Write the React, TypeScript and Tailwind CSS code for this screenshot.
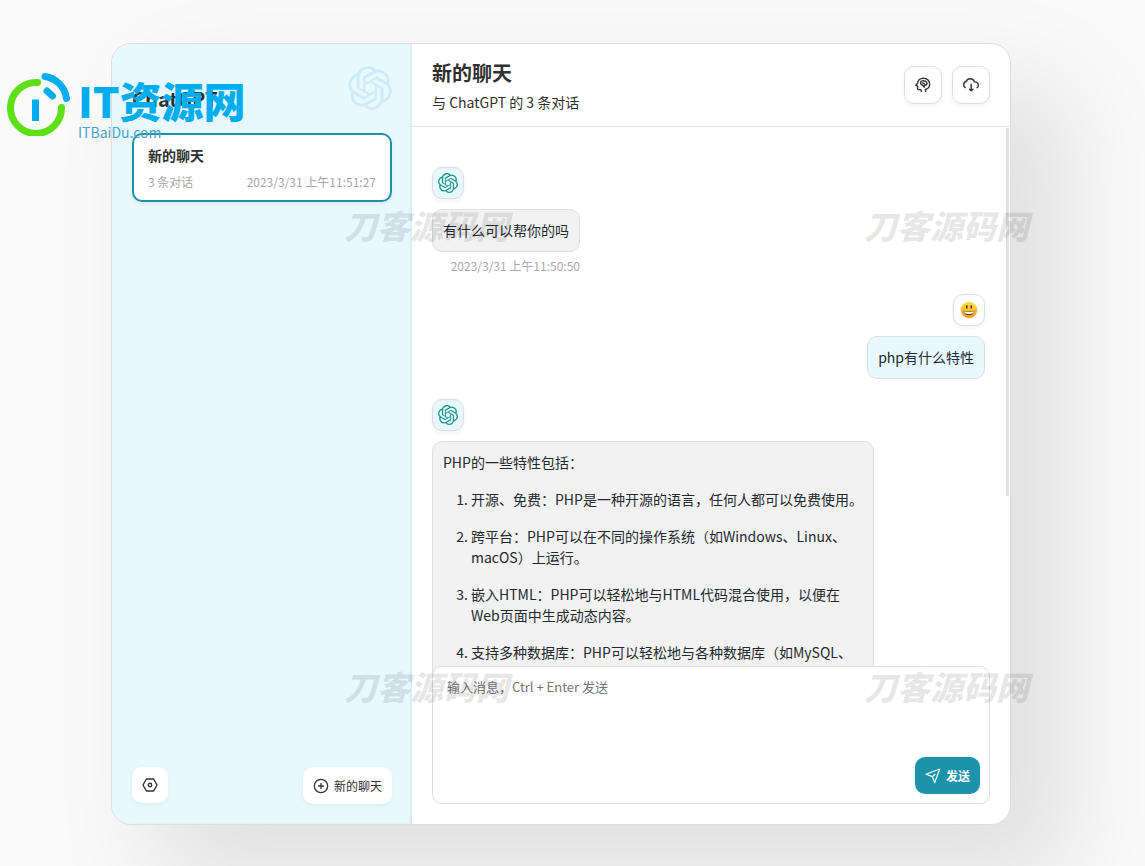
import React, { useState } from 'react';
import { SiOpenai } from 'react-icons/si';

type Message = {
  id: number;
  role: 'user' | 'assistant';
  content: string;
  items?: string[];
  date?: string;
};

const messages: Message[] = [
  { id: 1, role: 'assistant', content: '有什么可以帮你的吗', date: '2023/3/31 上午11:50:50' },
  { id: 2, role: 'user', content: 'php有什么特性' },
  {
    id: 3,
    role: 'assistant',
    content: 'PHP的一些特性包括：',
    items: [
      '开源、免费：PHP是一种开源的语言，任何人都可以免费使用。',
      '跨平台：PHP可以在不同的操作系统（如Windows、Linux、macOS）上运行。',
      '嵌入HTML：PHP可以轻松地与HTML代码混合使用，以便在Web页面中生成动态内容。',
      '支持多种数据库：PHP可以轻松地与各种数据库（如MySQL、Oracle、PostgreSQL等）进行交互。',
    ],
  },
];

const BrainIcon = () => (
  <svg className="size-4" viewBox="0 0 16 16" fill="none" stroke="#333" strokeWidth="1.4" strokeLinecap="round" strokeLinejoin="round">
    <path d="M6.400 14.400 5.700 12.600H3.400c-.5 0-.8-.4-.8-.9V9.200L.8 8.300 2.600 6.200C2.800 3.200 5.300 1.200 8.400 1.200c3.600 0 6.300 2.500 6.300 5.800 0 2.700-1.700 4.900-4.300 5.500l.4 1.900" />
    <path d="M5.800 5.200c0-1 .8-1.500 1.800-1.300C9.800 3.500 12 4.600 12 6.300c0 1.300-1.200 1.900-2.500 1.900L9.100 10 7.500 8C6.200 7.800 5.300 6.500 5.800 5.200zM7.600 5.900l1.700.8" />
  </svg>
);

const CloudIcon = () => (
  <svg className="size-4" viewBox="0 0 16 16" fill="none" stroke="#333" strokeWidth="1.4" strokeLinecap="round" strokeLinejoin="round">
    <path d="M2.200 10.600C1.200 9.900.7 8.900.7 7.700c0-1.800 1-3.100 2.600-3.500C3.900 2.500 5.400 1.700 7.200 1.700c2.100 0 3.700 1.200 4.200 3.200 2.200.1 3.900 1.500 3.900 3.400 0 1-.4 1.800-1.200 2.400" />
    <path d="M8.200 7.200v6.400M6.500 12.200l1.700 1.500 1.700-1.500" />
  </svg>
);

const SettingsIcon = () => (
  <svg className="size-4" viewBox="0 0 16 16" fill="none" stroke="#333" strokeWidth="1.4" strokeLinejoin="round">
    <path d="M4.400 2h7.200L15 8l-3.400 6H4.400L1 8z" />
    <circle cx="8" cy="8" r="1.700" />
  </svg>
);

const AddIcon = () => (
  <svg className="size-4" viewBox="0 0 16 16" fill="none" stroke="#333" strokeWidth="1.3" strokeLinecap="round">
    <circle cx="8" cy="8" r="6.700" />
    <path d="M8 5.500v5M5.500 8h5" />
  </svg>
);

const SendIcon = () => (
  <svg className="size-4" viewBox="0 0 16 16" fill="none" stroke="#fff" strokeWidth="1.200" strokeLinejoin="round" strokeLinecap="round">
    <path d="M14.700 1 9.700 14.600 7.400 8.600 1 6.200z" />
    <path d="M10 6.300 7.400 8.600" />
  </svg>
);

const SmileIcon = () => (
  <svg className="size-[18px]" viewBox="0 0 18 18">
    <defs>
      <linearGradient id="face" x1="0" y1="0" x2="0" y2="1">
        <stop offset="0" stopColor="#ffe14d" />
        <stop offset="1" stopColor="#f59a10" />
      </linearGradient>
    </defs>
    <circle cx="9" cy="9" r="8.300" fill="url(#face)" />
    <ellipse cx="6.800" cy="5.800" rx=".9" ry="1.900" fill="#5b3a12" />
    <ellipse cx="11.200" cy="5.800" rx=".9" ry="1.900" fill="#5b3a12" />
    <path d="M3.500 9.700c3.500.8 7.500.8 11 0-.2 3-2.400 4.600-5.500 4.600s-5.300-1.600-5.500-4.600z" fill="#6b3d10" />
    <path d="M4.200 10.300c3 .7 6.600.7 9.600 0l-.5 2c-2.700.8-5.900.8-8.600 0z" fill="#fff" />
  </svg>
);

const SiteLogo = () => (
  <div className="pointer-events-none absolute left-1.5 top-[72px] z-10 flex items-start gap-2 text-[#00adef]">
    <svg className="size-16" viewBox="0 0 64 64" fill="none" strokeLinecap="round">
      <path d="M31.500 10.500A25.500 25.500 0 1 0 55.500 35.500" stroke="#5de016" strokeWidth="7" />
      <path d="M39 4.500A25.500 25.500 0 0 1 60.500 26.500" stroke="#00adef" strokeWidth="7" />
      <path d="M41 19l5.500 5" stroke="#00adef" strokeWidth="7" />
      <path d="M29.500 27.500v21.500" stroke="#00adef" strokeWidth="7" strokeLinecap="butt" />
    </svg>
    <div className="pt-1">
      <div className="text-[42px] leading-[48px] font-black">IT资源网</div>
      <div className="text-sm leading-4 text-[#4aa3c7]">ITBaiDu.com</div>
    </div>
  </div>
);

const Watermark = ({ className }: { className: string }) => (
  <div
    className={`pointer-events-none absolute z-10 text-[33px] leading-8 font-black italic whitespace-nowrap text-black/10 ${className}`}
  >
    刀客源码网
  </div>
);

const Sidebar = () => (
  <aside className="flex w-[300px] shrink-0 flex-col bg-[#e7f8ff] p-5 shadow-[inset_-2px_0_2px_0_rgba(0,0,0,0.05)]">
    <div className="flex justify-between pb-5">
      <h1 className="pt-5 text-xl leading-[29px] font-bold">ChatGPT</h1>
      <SiOpenai className="mt-0.5 size-11 text-[#cdebf8]" />
    </div>
    <div className="flex-1">
      <button className="block w-full rounded-[10px] border-2 border-[#1d93ab] bg-white px-3.5 py-2.5 text-left shadow-[0_2px_4px_0_rgba(0,0,0,0.05)]">
        <div className="text-sm leading-5 font-bold">新的聊天</div>
        <div className="mt-2 flex justify-between text-xs leading-[17px] text-[#a6a6a6]">
          <span>3 条对话</span>
          <span>2023/3/31 上午11:51:27</span>
        </div>
      </button>
    </div>
    <div className="flex items-start justify-between">
      <button aria-label="设置" className="rounded-[10px] bg-white p-2.5 shadow-[0_2px_4px_0_rgba(0,0,0,0.05)]">
        <SettingsIcon />
      </button>
      <button className="flex items-center gap-[5px] rounded-[10px] bg-white p-2.5 text-xs leading-[17px] shadow-[0_2px_4px_0_rgba(0,0,0,0.05)]">
        <AddIcon />
        新的聊天
      </button>
    </div>
  </aside>
);

const MessageRow = ({ message }: { message: Message }) => {
  const isUser = message.role === 'user';

  return (
    <div className={`flex flex-col ${isUser ? 'items-end' : 'items-start'}`}>
      <div
        className={`flex size-8 items-center justify-center rounded-[10px] border border-[#dedede] shadow-[0_2px_4px_0_rgba(0,0,0,0.05)] ${
          isUser ? 'bg-white' : 'bg-[#e7f8ff]'
        }`}
      >
        {isUser ? <SmileIcon /> : <SiOpenai className="size-5 text-[#1f948f]" />}
      </div>
      <div className="mt-2.5 flex max-w-[80%] flex-col items-end">
        <div
          className={`rounded-[10px] border border-[#dedede] p-2.5 text-sm leading-[21px] text-[#24292f] ${
            isUser ? 'bg-[#e7f8ff]' : 'bg-[#f2f2f2]'
          }`}
        >
          <p>{message.content}</p>
          {message.items && (
            <ol className="mt-4 list-decimal space-y-4 pl-7">
              {message.items.map(item => (
                <li key={item}>{item}</li>
              ))}
            </ol>
          )}
        </div>
        {message.date && (
          <div className="pt-[5px] text-xs leading-[17px] text-[#aaa]">{message.date}</div>
        )}
      </div>
    </div>
  );
};

const Chat = () => {
  const [input, setInput] = useState('');

  return (
    <main className="flex min-w-0 flex-1 flex-col">
      <header className="flex items-center justify-between border-b border-[#e5e5e5] px-5 py-3.5">
        <div>
          <h2 className="text-xl leading-[29px] font-bold">新的聊天</h2>
          <div className="mt-[5px] text-sm leading-5">与 ChatGPT 的 3 条对话</div>
        </div>
        <div className="flex gap-2.5">
          <button aria-label="记忆" className="rounded-[10px] border border-[#dedede] p-2.5 shadow-[0_2px_4px_0_rgba(0,0,0,0.05)]">
            <BrainIcon />
          </button>
          <button aria-label="导出" className="rounded-[10px] border border-[#dedede] p-2.5 shadow-[0_2px_4px_0_rgba(0,0,0,0.05)]">
            <CloudIcon />
          </button>
        </div>
      </header>

      <div className="relative min-h-0 flex-1 overflow-hidden pt-10 pr-[25px] pl-5">
        {/* scroll thumb */}
        <div className="absolute top-px right-px h-[368px] w-[3px] bg-[#e0e0e0]"></div>
        <div className="flex flex-col gap-5">
          {messages.map(message => (
            <MessageRow key={message.id} message={message} />
          ))}
        </div>
      </div>

      <div className="relative -mt-2 px-5 pb-5">
        <textarea
          aria-label="输入消息"
          className="block h-[138px] w-full resize-none rounded-[10px] border border-[#dedede] bg-white px-3.5 py-2.5 text-[13px] leading-5 placeholder:text-[#757575]"
          placeholder="输入消息，Ctrl + Enter 发送"
          value={input}
          onChange={e => setInput(e.target.value)}
        />
        <button className="absolute right-[30px] bottom-[30px] flex items-center gap-[5px] rounded-[10px] bg-[#1d93ab] p-2.5 text-xs leading-[17px] font-bold text-white">
          <SendIcon />
          发送
        </button>
      </div>
    </main>
  );
};

const App = () => {
  return (
    <div className="relative h-screen overflow-hidden bg-[#fafafa] pt-[43px] pr-[134px] pb-[41px] pl-[111px] font-['Noto_Sans_CJK_SC',sans-serif] text-[#303030]">
      <div className="flex h-full overflow-hidden rounded-[20px] border border-[#dedede] bg-white shadow-[50px_50px_100px_10px_rgba(0,0,0,0.1)]">
        <Sidebar />
        <Chat />
      </div>
      <SiteLogo />
      <Watermark className="top-[209px] left-[344px]" />
      <Watermark className="top-[209px] left-[864px]" />
      <Watermark className="top-[670px] left-[344px]" />
      <Watermark className="top-[670px] left-[864px]" />
    </div>
  );
};

export default App;
